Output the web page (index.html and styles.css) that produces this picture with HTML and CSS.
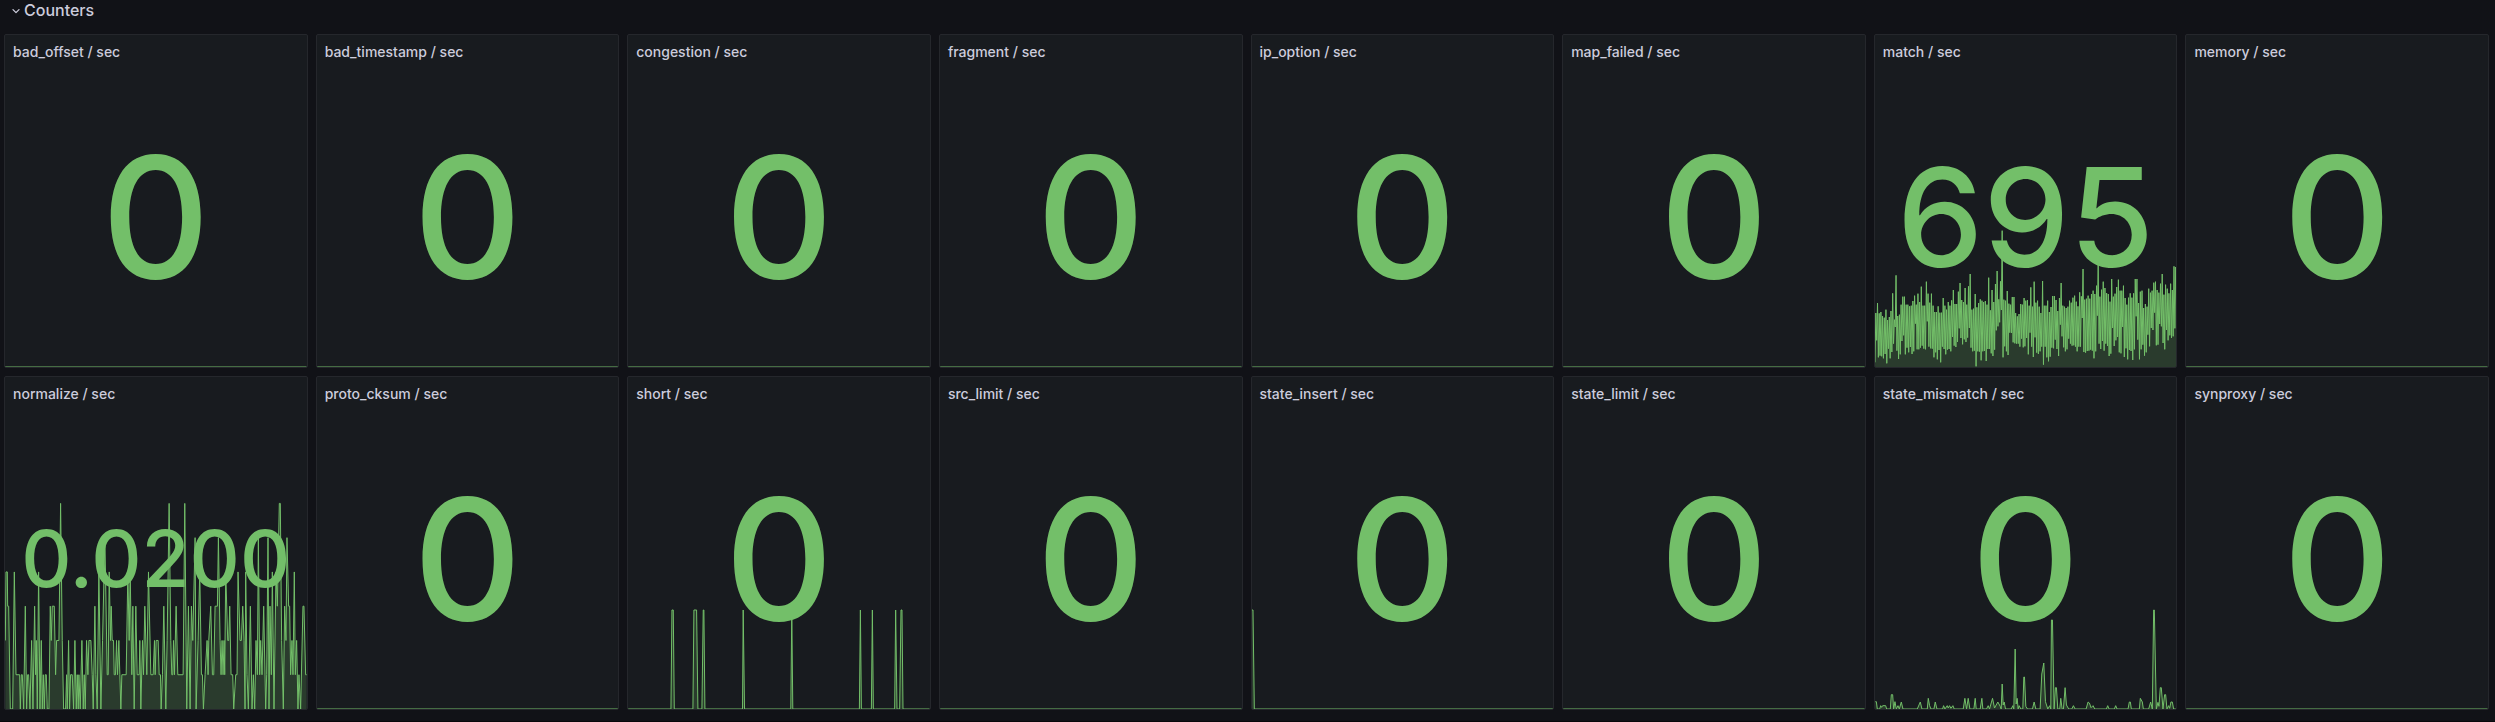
FILE: index.html
```html
<!DOCTYPE html>
<html lang="en">
<head>
<meta charset="utf-8">
<title>Counters</title>
<link rel="stylesheet" href="styles.css">
</head>
<body>
<main class="dashboard">
  <h2 class="row-header">
    <button class="row-toggle" type="button" aria-expanded="true">
      <svg class="chevron" viewBox="0 0 12 12" aria-hidden="true"><path d="M3 4.6 L6 7.6 L9 4.6"/></svg>
      <span>Counters</span>
    </button>
  </h2>
  <div class="panels">
    <section class="panel"><h3 class="panel-title">bad_offset / sec</h3><div class="panel-body"><svg class="spark" data-series="flat"></svg><span class="value">0</span></div></section>
    <section class="panel"><h3 class="panel-title">bad_timestamp / sec</h3><div class="panel-body"><svg class="spark" data-series="flat"></svg><span class="value">0</span></div></section>
    <section class="panel"><h3 class="panel-title">congestion / sec</h3><div class="panel-body"><svg class="spark" data-series="flat"></svg><span class="value">0</span></div></section>
    <section class="panel"><h3 class="panel-title">fragment / sec</h3><div class="panel-body"><svg class="spark" data-series="flat"></svg><span class="value">0</span></div></section>
    <section class="panel"><h3 class="panel-title">ip_option / sec</h3><div class="panel-body"><svg class="spark" data-series="flat"></svg><span class="value">0</span></div></section>
    <section class="panel"><h3 class="panel-title">map_failed / sec</h3><div class="panel-body"><svg class="spark" data-series="flat"></svg><span class="value">0</span></div></section>
    <section class="panel"><h3 class="panel-title">match / sec</h3><div class="panel-body"><svg class="spark" data-series="match"></svg><span class="value value-medium">695</span></div></section>
    <section class="panel"><h3 class="panel-title">memory / sec</h3><div class="panel-body"><svg class="spark" data-series="flat"></svg><span class="value">0</span></div></section>
    <section class="panel"><h3 class="panel-title">normalize / sec</h3><div class="panel-body"><svg class="spark" data-series="normalize"></svg><span class="value value-small">0.0200</span></div></section>
    <section class="panel"><h3 class="panel-title">proto_cksum / sec</h3><div class="panel-body"><svg class="spark" data-series="flat"></svg><span class="value">0</span></div></section>
    <section class="panel"><h3 class="panel-title">short / sec</h3><div class="panel-body"><svg class="spark" data-series="short"></svg><span class="value">0</span></div></section>
    <section class="panel"><h3 class="panel-title">src_limit / sec</h3><div class="panel-body"><svg class="spark" data-series="flat"></svg><span class="value">0</span></div></section>
    <section class="panel"><h3 class="panel-title">state_insert / sec</h3><div class="panel-body"><svg class="spark" data-series="insert"></svg><span class="value">0</span></div></section>
    <section class="panel"><h3 class="panel-title">state_limit / sec</h3><div class="panel-body"><svg class="spark" data-series="flat"></svg><span class="value">0</span></div></section>
    <section class="panel"><h3 class="panel-title">state_mismatch / sec</h3><div class="panel-body"><svg class="spark" data-series="mismatch"></svg><span class="value">0</span></div></section>
    <section class="panel"><h3 class="panel-title">synproxy / sec</h3><div class="panel-body"><svg class="spark" data-series="flat"></svg><span class="value">0</span></div></section>
  </div>
</main>
<script src="charts.js"></script>
</body>
</html>
```
FILE: styles.css
```css
* {
  box-sizing: border-box;
}

body {
  margin: 0;
  background: #111217;
  color: #ccccdc;
  font-family: Inter, "Liberation Sans", sans-serif;
  font-size: 14px;
}

.dashboard {
  display: flex;
  flex-direction: column;
  gap: 12px;
  min-height: 100vh;
  padding: 0 6px 11px 4px;
  border-bottom: 1px solid #08080b;
}

.row-header {
  display: flex;
  margin: 0;
  height: 22px;
}

.row-toggle {
  display: flex;
  align-items: center;
  gap: 2px;
  padding: 0 6px;
  border: 0;
  background: none;
  color: inherit;
  font: 500 16px/22px Inter, "Liberation Sans", sans-serif;
  cursor: pointer;
}

.row-toggle span {
  padding-bottom: 2px;
}

.chevron {
  width: 12px;
  height: 12px;
  fill: none;
  stroke: currentColor;
  stroke-width: 1.3;
  stroke-linecap: round;
  stroke-linejoin: round;
}

.panels {
  flex: 1;
  display: grid;
  grid-template-columns: repeat(8, minmax(0, 1fr));
  grid-auto-rows: minmax(0, 1fr);
  gap: 8px;
}

.panel {
  display: flex;
  flex-direction: column;
  min-height: 240px;
  overflow: hidden;
  border: 1px solid #25272c;
  border-radius: 2px;
  background: #181b1f;
}

.panel-title {
  margin: 0;
  padding: 6px 8px 4px;
  font-size: 14px;
  font-weight: 500;
  line-height: 22px;
  white-space: nowrap;
}

.panel-body {
  flex: 1;
  display: grid;
  grid-template: minmax(0, 1fr) / minmax(0, 1fr);
  min-height: 0;
}

.spark,
.value {
  grid-area: 1 / 1;
}

.spark {
  width: 100%;
  height: 100%;
}

.spark-area {
  fill: #73bf69;
  fill-opacity: 0.2;
}

.spark-line {
  fill: none;
  stroke: #73bf69;
  stroke-width: 1;
  vector-effect: non-scaling-stroke;
}

.value {
  place-self: center;
  color: #73bf69;
  font-size: 168px;
  font-weight: 500;
  line-height: 1;
}

.value-medium {
  font-size: 137px;
}

.value-small {
  font-size: 78px;
}
```
FILE: charts.js
```js
const WIDTH = 906;
const HEIGHT = 900;

// Highest and lowest sample of each interval of the match series.
const matchHigh = [
  162,192,161,165,153,148,172,141,150,168,221,142,275,153,157,187,211,211,187,187,182,184,198,214,187,220,195,241,184,184,
  256,220,193,220,184,165,165,182,163,163,207,184,172,195,184,200,231,189,189,226,252,201,195,237,187,242,279,172,175,219,
  179,192,203,199,195,198,187,268,170,231,195,249,288,203,257,409,202,199,228,190,187,210,210,162,152,159,189,187,207,199,
  201,184,239,181,256,193,199,181,162,258,184,184,199,165,180,213,213,201,168,207,252,184,181,177,181,199,193,208,214,196,
  182,224,212,294,202,205,214,205,219,229,219,244,312,211,232,256,237,222,219,196,264,211,220,240,262,229,229,244,207,187,
  208,221,208,221,264,264,192,226,229,177,189,181,235,223,229,253,256,231,223,250,279,217,247,235,221,250,231,302,300,311];
const matchLow = [
  14,80,29,34,32,26,39,11,55,26,45,70,120,49,24,38,78,95,38,58,44,60,39,47,130,53,53,58,64,55,
  53,137,61,56,55,29,44,23,51,14,61,54,38,52,54,47,90,64,60,75,116,87,68,83,75,88,117,58,47,49,
  2,47,46,20,47,48,18,54,54,41,33,52,110,122,134,171,29,62,47,36,103,102,74,71,70,70,61,85,59,62,
  87,38,103,61,30,89,43,39,47,61,7,61,29,17,31,58,56,82,54,33,127,92,59,47,53,85,70,64,65,61,
  47,61,61,147,45,43,48,49,52,49,26,47,154,70,54,78,49,70,63,33,40,117,63,80,90,44,41,120,30,56,
  23,51,48,21,53,152,82,23,53,67,34,44,97,62,117,111,163,65,67,129,122,72,53,111,80,95,87,92,116,178];

const matchPoints = matchHigh.flatMap((high, i) => {
  const x = 5.06 * i;
  return [[x, matchLow[i]], [x + 2.5, high]];
});

const pairs = (flat, startX, scale) => {
  const points = [];
  for (let i = 0; i < flat.length; i += 2) {
    points.push([flat[i] - startX, flat[i + 1] * scale]);
  }
  return points;
};

const series = {
  flat: [[0, 0], [WIDTH, 0]],
  match: matchPoints,
  insert: [[0, 297], [3, 297], [7, 0], [WIDTH, 0]],
  normalize: pairs([
    16,2,18,4,22,4,23,3,26,3,31,0,38,0,43,4,48,1,59,1,61,0,64,1,67,1,71,0,76,3,80,0,83,1,86,1,90,0,95,2,99,0,104,3,107,1,109,2,
    112,0,116,4,120,0,124,2,127,0,130,1,133,0,136,1,139,1,142,0,147,0,151,3,154,2,157,3,163,3,167,1,170,2,177,2,182,6,187,2,
    191,0,197,0,200,1,202,0,206,2,209,0,212,1,217,1,221,0,225,2,229,0,232,1,235,0,237,1,241,0,246,2,250,0,253,1,256,0,260,2,
    264,1,267,2,273,2,277,1,280,0,285,3,288,1,292,0,297,4,303,0,308,2,315,5,322,1,325,1,328,4,332,2,334,3,337,2,341,2,343,1,
    347,1,350,2,353,1,357,2,360,1,363,0,366,1,379,1,384,4,388,2,391,4,396,1,399,3,403,0,408,3,412,1,418,1,420,2,423,0,428,2,
    431,1,435,3,441,1,446,4,453,1,460,1,464,2,466,1,469,2,475,2,478,1,482,1,484,0,488,1,492,3,498,0,502,2,508,6,513,2,516,1,
    519,1,521,2,524,1,529,3,534,1,550,1,555,6,561,0,566,3,571,0,575,3,579,2,586,5,589,0,595,2,600,4,605,1,608,1,611,0,616,1,
    622,2,625,1,627,2,633,3,638,1,642,1,646,3,653,3,656,5,661,2,664,1,667,2,670,1,673,2,675,1,678,4,684,2,687,2,690,3,694,1,
    699,1,702,0,708,1,712,1,715,4,721,2,725,2,729,3,733,2,736,0,738,4,742,1,746,0,752,3,757,0,761,1,765,0,769,2,773,1,776,5,
    780,1,783,2,787,1,792,3,798,0,801,1,805,5,808,0,811,3,815,1,818,4,823,0,829,4,833,3,839,6,842,6,846,2,851,0,855,3,859,2,
    862,5,867,3,870,3,873,1,877,2,880,1,884,4,887,1,891,2,895,0,898,1,903,0,910,3,913,3,918,1,921,1], 15, 102.8),
  short: pairs([
    23,0,152,0,155,1,159,1,162,0,218,0,221,1,229,1,233,0,245,0,249,1,251,1,254,0,367,0,369,1,373,0,512,0,515,1,518,0,
    718,0,721,1,724,0,754,0,757,1,760,0,824,0,827,1,831,0,839,0,843,1,846,1,849,0,929,0], 23, 297),
  mismatch: pairs([
    27,22,30,22,33,0,40,0,43,10,46,5,49,10,58,10,61,0,72,0,75,43,79,43,82,0,86,22,90,0,95,10,99,0,105,21,110,0,153,0,162,21,
    167,0,183,0,186,32,190,10,194,0,203,0,207,21,212,0,229,0,232,10,236,0,243,10,246,3,250,10,254,2,260,10,264,0,291,0,296,32,
    301,0,306,32,311,0,323,0,327,32,330,0,342,0,347,32,350,0,361,0,366,10,370,0,379,32,385,3,395,21,402,8,405,0,408,75,411,12,
    414,21,418,0,435,0,440,10,443,0,447,180,450,15,453,32,456,0,459,10,464,0,470,0,473,96,475,96,479,8,484,0,499,0,504,21,
    509,0,522,0,527,105,533,138,538,22,545,0,551,10,554,0,556,267,559,267,564,0,568,64,571,64,575,0,581,0,584,32,588,0,592,0,
    597,64,601,12,608,0,617,0,622,10,627,0,660,0,666,21,670,18,675,4,681,10,686,0,721,0,725,10,729,0,745,0,749,10,753,0,786,0,
    790,21,793,21,796,0,820,0,823,32,829,21,832,0,848,0,854,21,859,0,863,297,865,297,871,0,876,20,879,8,883,64,886,64,891,0,
    896,43,899,43,903,0,908,10,911,2,915,21,919,21,923,0,932,0], 26, 1)
};

const addPath = (svg, className, d) => {
  const path = document.createElementNS("http://www.w3.org/2000/svg", "path");
  path.setAttribute("class", className);
  path.setAttribute("d", d);
  svg.append(path);
};

document.querySelectorAll(".spark").forEach((svg) => {
  const points = series[svg.dataset.series];
  const line = points.map(([x, y]) => `${x.toFixed(1)} ${(HEIGHT - y).toFixed(1)}`).join("L");
  const firstX = points[0][0];
  const lastX = points[points.length - 1][0];
  svg.setAttribute("viewBox", `0 0 ${WIDTH} ${HEIGHT}`);
  svg.setAttribute("preserveAspectRatio", "none");
  svg.setAttribute("aria-hidden", "true");
  addPath(svg, "spark-area", `M${firstX} ${HEIGHT}L${line}L${lastX} ${HEIGHT}Z`);
  addPath(svg, "spark-line", `M${line}`);
});
```
